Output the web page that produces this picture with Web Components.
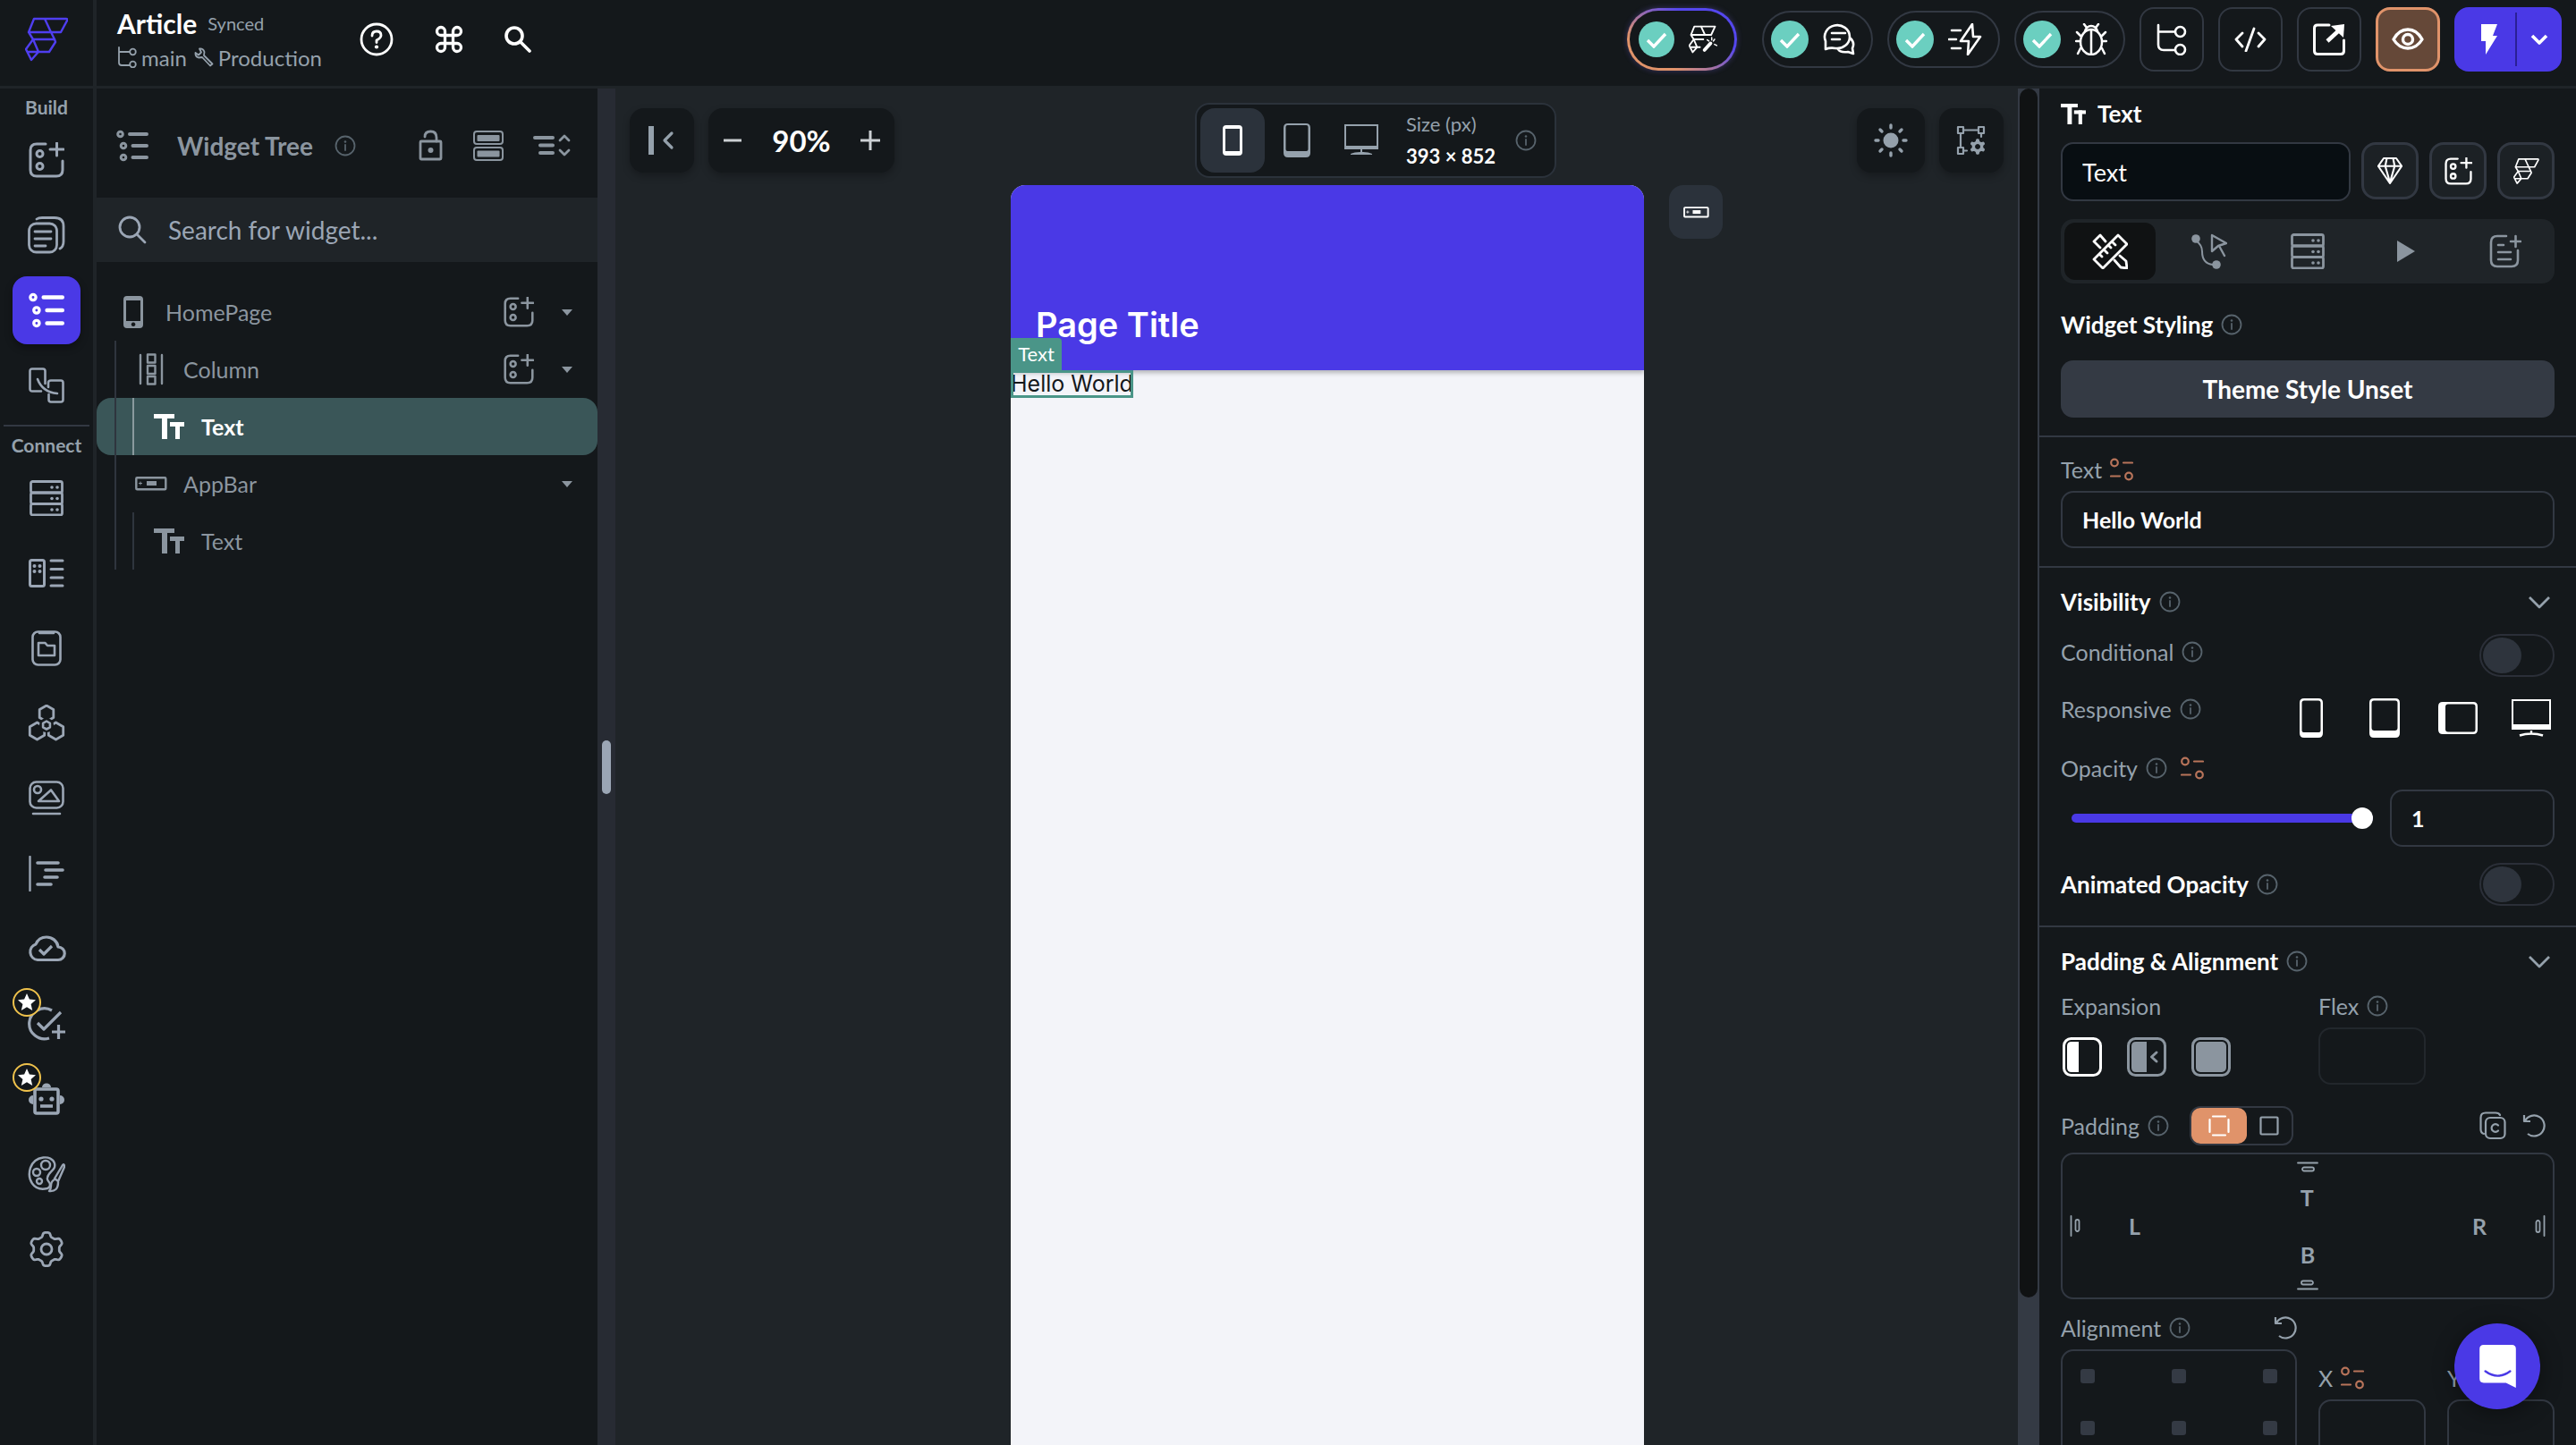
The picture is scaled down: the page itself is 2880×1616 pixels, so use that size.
<!DOCTYPE html>
<html lang="en">
<head>
<meta charset="utf-8">
<title>Article</title>
<style>
html,body{margin:0;height:100%;overflow:hidden;background:#14181b}
body{font-family:"Lato","Open Sans",sans-serif;font-size:24px;color:#95a1ac;
--bg:#14181b;--surface:#1f2428;--line:#323842;--muted:#95a1ac;--accent:#4a39e6;--orange:#e0936a;--teal:#6bcfc0}
</style>
</head>
<body>
<app-shell></app-shell>
<script>
const L=(s,w,extra='')=>`<g fill="none" stroke="currentColor" stroke-width="${w}" stroke-linecap="round" stroke-linejoin="round" ${extra}>${s}</g>`;
const F=s=>`<g fill="currentColor">${s}</g>`;
function gearPath(c,r,a){let d='';for(let i=0;i<=120;i++){const t=i/120*2*Math.PI;const k=Math.cos(6*t);const q=r+a*Math.tanh(2*k);
 d+=(i?'L':'M')+(c+q*Math.sin(t)).toFixed(2)+' '+(c-q*Math.cos(t)).toFixed(2);}return d+'Z';}
function hex(cx,cy,r){let d='';for(let i=0;i<6;i++){const t=i*Math.PI/3;d+=(i?'L':'M')+(cx+r*Math.sin(t)).toFixed(1)+' '+(cy-r*Math.cos(t)).toFixed(1);}return `<path d="${d}Z"/>`;}
const FLOW='<path d="M10 2H46Q48 2 47 4L40 17H4ZM22 2L29 17M4 17L9 25H33L29 17M33 25L34 28L27 39H3M9 25L15 39M9 25L1 36L7 48L15 39"/>';
const SERVER=`<rect x="1.5" y="1.5" width="35" height="12.5" rx="2"/><rect x="1.5" y="14" width="35" height="12.5" rx="2"/><rect x="1.5" y="26.500" width="35" height="12.500" rx="2"/>`;
const dots=a=>a.map(([x,y,r])=>`<circle cx="${x}" cy="${y}" r="${r}"/>`).join('');
const ICONS={
 logo:[48,50,L(FLOW,2.4)],
 flow:[32,34,L(FLOW,2.8),'0 0 49 50'],
 flowai:[32,34,L('<path d="M10 2H47L40 17H4ZM22 2L29 17M4 17L9 25H26M9 25L15 39H20M9 25L1 36L7 48L15 39M4 39H15"/>',3)+L('<path d="M28 44L39 32"/>',6)+L('<path d="M41 22V26M46 25L44 28M46 34L50 36M33 26L36 28"/>',2.4),'0 0 51 50'],
 add:[40,40,L('<path d="M19 2H9Q2 2 2 9V31Q2 38 9 38H31Q38 38 38 31V21M24 8H39M31.500 1V15"/><circle cx="12.500" cy="13" r="3.500"/><circle cx="12.500" cy="27" r="3.500"/>',3)],
 pages:[42,42,L('<rect x="1.500" y="8" width="31" height="32" rx="8"/><path d="M8 17H26M8 25H26M8 33H20M10 3Q12 1.500 16 1.500H30Q40 1.500 40 11V28Q40 34 36 36"/>',2.8)],
 tree:[36,36,L('<circle cx="4.500" cy="5" r="2.800"/><circle cx="8" cy="18" r="2.800"/><circle cx="8" cy="31" r="2.800"/>',3)+L('<path d="M15 5H34M18.500 18H34M18.500 31H34"/>',4)],
 board:[40,40,L('<path d="M14 26.500H4Q1.500 26.500 1.500 24V4Q1.500 1.500 4 1.500H16Q18.500 1.500 18.500 4V18M22 22V17Q22 14.500 25 14.500H36Q38.500 14.500 38.500 17V36Q38.500 38.500 36 38.500H25Q22.500 38.500 22.500 36V30M10 13C13 21 20 28 32 29"/>',2.6)],
 server:[38,40,L(SERVER,2.8)+F(dots([[25,8,1.8],[31,8,1.8],[25,20.500,1.8],[31,20.500,1.8],[25,33,1.8],[31,33,1.8]]))],
 api:[40,32,L('<rect x="1.500" y="1.500" width="16" height="29" rx="2"/><path d="M25 2H38M25 11.500H38M25 21H38M25 30H38"/>',3)+F(dots([[6.500,8,2],[12.500,8,2],[6.500,14,2],[12.500,14,2]]))],
 files:[34,40,L('<rect x="1.500" y="1.500" width="31" height="37" rx="6"/><path d="M9 3H25M8 14V28H26V17H18L15.500 14Z"/>',2.6)],
 hexes:[42,42,L(hex(21,10,9)+hex(10.500,29.500,9.500)+hex(31.500,29.500,9.500),2.8)+`<circle cx="21" cy="23" r="8" fill="#14181b"/>`+L(hex(21,23,4.500),2.6)],
 image:[40,40,L('<rect x="1.500" y="1.500" width="37" height="29" rx="7"/><circle cx="10" cy="10" r="4"/><path d="M11 23L25 10.500L34 23ZM5 37H35"/>',2.6)],
 logic:[40,40,L('<path d="M1.500 1V39"/>',2.4)+L('<path d="M10 8H33M19 16H38M18 24H32M10 32H25"/>',3.6)],
 cloud:[44,30,L('<path d="M12 27.500H35A7 7 0 0 0 35 13C34 6 28 2 22 2C16 2 12 5 10 10A9 9 0 0 0 12 27.500Z"/><path d="M14 16L19 21L28 12" stroke-linecap="butt"/>',3.2)],
 taskadd:[42,38,L('<path d="M27 4A17 17 0 1 0 24 35M11 18L18 25L37 6M27 28H42M34.500 20V36" stroke-linecap="butt"/>',3.2)],
 robot:[40,36,L('<rect x="7" y="7" width="26" height="27" rx="2"/><path d="M13 26H27" stroke-linecap="butt"/>',3.6)+F('<path d="M15 5a5 4.500 0 0 1 10 0zM5 14v10a5 5 0 0 1 0-10zM35 14v10a5 5 0 0 0 0-10z"/>'+dots([[14,18,2.6],[26,18,2.6]]))],
 palette:[42,42,L('<path d="M22 37C6 41 -1 26 3 14C8 0 27 -1 30 9C32 17 23 18 22 25C21 29 25 29 25 33Q25 36 22 37Z"/><circle cx="20" cy="11" r="5"/><circle cx="10" cy="19" r="4"/><circle cx="13" cy="29" r="3"/><path d="M39 11L30 26L34 29L41 13Q41 9 39 11ZM30 27Q26 29 26 34Q26 38 24 40Q34 41 34 30"/>',2.4)],
 gear:[42,42,L(`<path d="${gearPath(21,16.5,2.3)}"/><circle cx="21" cy="21" r="6"/>`,2.8)],
 branch:[22,24,L('<path d="M2 1V18Q2 21 5 21H14M2 6H14"/><circle cx="17.500" cy="6" r="3.300"/><circle cx="17.500" cy="20" r="3.300"/>',1.8)],
 wrench:[22,22,L('<path d="M6 1.500Q10 1 11.500 5L11 9L20.500 18.500L18 20.500L9 11L5 11.500Q1 10 1.500 6L5 8.500L8 5.500Z"/>',1.8)],
 help:[38,38,L('<circle cx="19" cy="19" r="17"/><path d="M14 15Q14 10 19 10Q24 10 24 14.500Q24 17.500 19 20V22.500"/>',2.8)+F(dots([[19,27.500,2.1]]))],
 cmd:[38,38,L('<path d="M15 6v12a3 3 0 1 0 3-3H6a3 3 0 1 0 3 3V6a3 3 0 1 0-3 3h12a3 3 0 1 0-3-3"/>',2.2),'0 0 24 24'],
 find:[30,30,L('<circle cx="11" cy="11" r="9"/><path d="M18 18L28 28"/>',3.6)],
 search:[32,32,L('<circle cx="13" cy="13" r="11"/><path d="M21 21L30 30"/>',2.8)],
 info:[24,24,L('<circle cx="12" cy="12" r="10.500"/><path d="M12 11V17"/>',1.8)+F(dots([[12,7.500,1.3]]))],
 lock:[28,36,L('<rect x="2" y="13" width="23" height="20" rx="1"/><path d="M7 8Q7 2 13.500 2Q20 2 20 9V13"/>',2.8)+F(dots([[13.500,23,3]]))],
 rows:[34,34,L('<rect x="1" y="1" width="32" height="14" rx="3"/><rect x="1" y="19" width="32" height="14" rx="3"/>',2)+F('<rect x="4.500" y="5" width="25" height="7" rx="1"/><rect x="4.500" y="22.500" width="25" height="7" rx="1"/>')],
 collapse:[42,26,L('<path d="M2 4H22M8 12.500H22M8 21H22" />',4)+L('<path d="M30 7L35 2L40 7M30 18L35 23L40 18"/>',2.8)],
 phone:[22,36,F('<path fill-rule="evenodd" d="M4 0H18Q22 0 22 4V32Q22 36 18 36H4Q0 36 0 32V4Q0 0 4 0ZM3 5V28H19V5ZM11 29.500a2.300 2.300 0 1 0 .1 0z"/>')],
 column:[28,36,L('<path d="M2 2V34M26 2V34"/><rect x="10" y="1.500" width="8.500" height="9"/><rect x="10" y="14" width="8.500" height="9"/><rect x="10" y="26" width="8.500" height="8.500"/>',2.4)],
 text:[34,28,F('<rect x="0" y="0" width="23" height="5"/><rect x="9" y="0" width="6" height="28"/><rect x="18" y="9" width="16" height="5"/><rect x="24" y="9" width="5" height="19"/>')],
 appbar:[36,16,L('<rect x="1.300" y="1.300" width="33" height="13" rx="1"/>',2.4)+L('<path d="M4.500 7.500H7.500M6 6V9"/>',1)+F('<rect x="13" y="5" width="11" height="5"/>')],
 caret:[12,7,F('<path d="M0 0H12L6 7Z"/>')],
 check:[24,20,`<path d="M2 11L9 18L22 4" fill="none" stroke="currentColor" stroke-width="3.400"/>`],
 chat:[36,36,L('<path d="M3 29V20A14 13 0 1 1 14 28Q8 27 3 29ZM10 11H25M10 18H19M31 17Q36 22 33 28L34 34L28 32Q19 33 17 29"/>',2.6)],
 bolts:[38,36,L('<path d="M27 1L14 20H23L22 35L36 15H28ZM4 8H14M1 18H9M4 28H14"/>',2.6)],
 bug:[36,36,L('<ellipse cx="18" cy="21" rx="12" ry="14"/><path d="M18 8V35M11 9Q13 3 18 3Q23 3 25 9M10 1L13 5M26 1L23 5M6 14L2 10M30 14L34 10M1 20H6M30 20H35M6 28L3 34M30 28L33 34"/>',2.5)],
 nodes:[36,36,L('<path d="M3 2V24Q3 30 9 30H21M3 9.500H21"/><circle cx="27.500" cy="9.500" r="5.500"/><circle cx="27.500" cy="29.500" r="5.500"/>',2.6)],
 code:[36,28,L('<path d="M9 7L2 14L9 22M27 7L34 14L27 22M22 2L13 27"/>',2.8)],
 open:[36,36,L('<path d="M18 2H5Q1.500 2 1.500 5.500V31Q1.500 34.500 5 34.500H31Q34.500 34.500 34.500 31V19"/>',3)+`<path d="M16 20L29 8" stroke="currentColor" stroke-width="4.500"/>`+F('<path d="M20 3L35 1L34 16Z"/>')],
 eye:[36,26,L('<path d="M2 13Q8 2 18 2Q28 2 34 13Q28 23 18 23Q8 23 2 13Z"/><circle cx="18" cy="13" r="5.500"/>',3.4)],
 flash:[20,34,F('<path d="M1 0H19L14 13H19L6 34V19H1Z"/>')],
 chev:[20,12,L('<path d="M2 2L10 10L18 2" stroke-linecap="butt"/>',3.6)],
 chevthin:[26,15,L('<path d="M2 2L13 13L24 2" stroke-linecap="butt"/>',2.8)],
 hide:[30,34,F('<rect x="0" y="1" width="6" height="32"/>')+L('<path d="M26 9L18 17L26 25"/>',3.2)],
 minus:[22,22,L('<path d="M1 11H21" stroke-linecap="butt"/>',3)],
 plus:[22,22,L('<path d="M0 11H22M11 0V22" stroke-linecap="butt"/>',3)],
 mobile:[22,34,F('<path fill-rule="evenodd" d="M4 0H18Q22 0 22 4V30Q22 34 18 34H4Q0 34 0 30V4Q0 0 4 0ZM3 4V29H19V4Z"/>')],
 tablet:[30,38,F('<path fill-rule="evenodd" d="M5 0H25Q30 0 30 5V33Q30 38 25 38H5Q0 38 0 33V5Q0 0 5 0ZM2.500 4V29Q2.500 31 4.500 31H25.500Q27.500 31 27.500 29V4Q27.500 2 25.500 2H4.500Q2.500 2 2.500 4Z"/>')],
 desktop:[38,36,F('<path fill-rule="evenodd" d="M0 0H38V28H0ZM2 2V24H36V2ZM18 28H20V31Q27 31 31 33V34H7V33Q11 31 18 31Z"/>')],
 mobile2:[26,44,F('<path fill-rule="evenodd" d="M5 0H21Q26 0 26 5V39Q26 44 21 44H5Q0 44 0 39V5Q0 0 5 0ZM2.500 5V36Q2.500 38 4.500 38H21.500Q23.500 38 23.500 36V5Q23.500 2.500 21 2.500H5Q2.500 2.500 2.500 5Z"/>')],
 tablet2:[34,44,F('<path fill-rule="evenodd" d="M5 0H29Q34 0 34 5V39Q34 44 29 44H5Q0 44 0 39V5Q0 0 5 0ZM2.500 5V33Q2.500 36 5.500 36H28.500Q31.500 36 31.500 33V5Q31.500 2.500 29 2.500H5Q2.500 2.500 2.500 5Z"/>')],
 landscape:[44,36,F('<path fill-rule="evenodd" d="M5 0H39Q44 0 44 5V31Q44 36 39 36H5Q0 36 0 31V5Q0 0 5 0ZM11 2.500Q8 2.500 8 5.500V30.500Q8 33.500 11 33.500H39Q41.500 33.500 41.500 31V5Q41.500 2.500 39 2.500Z"/>')],
 desktop2:[44,42,F('<path fill-rule="evenodd" d="M0 0H44V34H0ZM2 2V28H42V2Z"/>')+L('<path d="M22 35V38M9 40.500Q15 38.500 22 38.500Q29 38.500 35 40.500" stroke-linecap="butt"/>',2.4)],
 sun:[38,38,F(dots([[19,19,8.500]]))+L('<path d="M19 2V5M19 33V36M2 19H5M33 19H36M7 7L9 9M29 29L31 31M31 7L29 9M9 29L7 31"/>',3.4)],
 frame:[34,34,L('<rect x="2" y="2" width="6" height="7"/><rect x="25" y="2" width="6" height="7"/><rect x="2" y="25" width="6" height="7"/><path d="M8 5.500H25M5 9V25M28 9V13M8 28.500H12"/>',2.2)+F(`<path fill-rule="evenodd" d="${gearPath(24,7.5,1.3)}M24 21a3 3 0 1 0 .1 0z"/>`)],
 gem:[32,36,L('<path d="M8 2H24L31 12L16 34L1 12ZM1 12H31M12 2L10 12L16 33L22 12L20 2"/>',2.4)],
 design:[40,40,L('<path d="M29 2L39 12L12 39L2 29ZM13 18L17 22M18 13L21 16M22 9L26 13M8 23L11 26"/><path d="M15 9L9 2L2 9L9 16M25 30L32 38L39 39L38 31L31 25"/>',2.8)],
 action:[40,40,F(dots([[5,6,4.800],[28,35,4.800]]))+L('<path d="M5 8Q12 13 12 20Q12 34 24 35" stroke-width="2"/><path d="M23 2L39 11L30 14L23 20ZM31 14L37 25"/>',2.4)],
 play:[20,24,F('<path d="M0 0L20 12L0 24Z"/>')],
 docadd:[36,38,L('<path d="M19 2H9Q2 2 2 9V29Q2 36 9 36H25Q32 36 32 29V18M24 8H35M29.500 2V14M10 12H16M10 20H24M10 28H24"/>',2.6)],
 vars:[26,26,L('<circle cx="5" cy="5.500" r="3.800"/><circle cx="21" cy="20.500" r="3.800"/><path d="M15 5.500H25M1 20.500H11"/>',2.2)],
 exp1:[44,44,L('<rect x="1.500" y="1.500" width="41" height="41" rx="8"/>',3)+F('<path d="M10 5H18V39H10Q5 39 5 34V10Q5 5 10 5Z"/>')],
 exp2:[44,44,L('<rect x="1.500" y="1.500" width="41" height="41" rx="8"/>',3)+F('<path d="M10 5H22V39H10Q5 39 5 34V10Q5 5 10 5Z"/>')+L('<path d="M33 17L27.500 22L33 27" />',3)],
 exp3:[44,44,L('<rect x="1.500" y="1.500" width="41" height="41" rx="8"/>',3)+F('<rect x="5" y="5" width="34" height="34" rx="5"/>')],
 sides:[24,24,L('<path d="M5 1.500H19M5 22.500H19M1.500 5V19M22.500 5V19"/>',2.2)],
 square:[22,22,L('<rect x="1.500" y="1.500" width="19" height="19" rx="1"/>',2.2)],
 copy:[30,32,L('<rect x="7" y="7" width="21.500" height="23" rx="5"/><path d="M5 25Q1.500 24 1.500 20V7Q1.500 1.500 7 1.500H18Q22 1.500 23 4"/><path d="M21 15.500A4.300 4.300 0 1 0 21 21.500"/>',2.2)],
 undo:[26,28,L('<path d="M2 2V9H9M3 8.500A11.500 11.500 0 1 1 6 23" stroke-linecap="butt"/>',2.2)],
 edge:[24,12,L('<path d="M1 1.500H23"/><rect x="6" y="6.500" width="13" height="4" rx="2"/>',1.8)],
 star:[22,22,'<path d="M11 1L13.900 7.600L21 8.300L15.600 13L17.200 20L11 16.300L4.800 20L6.400 13L1 8.300L8.100 7.600Z" fill="#fff"/>'],
 talk:[44,52,'<path d="M5 0H39Q44 0 44 5V52L32 46H5Q0 46 0 41V5Q0 0 5 0Z" fill="#fff"/><path d="M7 32Q22 43 37 32" fill="none" stroke="#4a39e6" stroke-width="2.600" stroke-linecap="round"/>']
};
const BASE=`*{box-sizing:border-box}button,input{font:inherit;color:inherit;margin:0}
button{background:none;border:0;padding:0;display:flex;align-items:center;justify-content:center;flex:none}
h1,h2,h3,p,ul{margin:0;padding:0;font:inherit}
.row{display:flex;align-items:center}.grow{flex:1;min-width:0}`;
function define(name,css,html){
 customElements.define(name,class extends HTMLElement{
  constructor(){super();this.attachShadow({mode:'open'});}
  connectedCallback(){this.shadowRoot.innerHTML=`<style>${BASE}${css}</style>`+(typeof html==='function'?html(this):html);}
 });
}
const I=(n,h,c)=>`<ui-icon name="${n}"${h?` size="${h}"`:''}${c?` class="${c}"`:''}></ui-icon>`;

define('ui-icon',':host{display:block;flex:none;line-height:0}svg{display:block}',el=>{
 const [w,h,s,vb]=ICONS[el.getAttribute('name')];const H=+(el.getAttribute('size')||h);const W=Math.round(w*H/h);
 return `<svg width="${W}" height="${H}" viewBox="${vb||`0 0 ${w} ${h}`}" aria-hidden="true">${s}</svg>`;});
define('info-dot',':host{display:block;flex:none;color:#57636c}',I('info'));

define('status-pill',`:host{display:block}
button{height:64px;border:2px solid var(--line);border-radius:32px;padding:0 18px 0 8px;gap:16px;color:#fff}
.ok{width:42px;height:42px;border-radius:50%;background:var(--teal);display:flex;align-items:center;justify-content:center}
:host([glow]) button{height:70px;border:3px solid transparent;border-radius:35px;padding:0 19px 0 10px;
 background:linear-gradient(var(--bg),var(--bg)) padding-box,linear-gradient(215deg,#5547ee 30%,#e0936a 75%) border-box;box-shadow:0 0 6px #6f5cd066}
:host([glow]) .ok{width:40px;height:40px}`,
 el=>`<button type="button" aria-label="${el.getAttribute('icon')}"><span class="ok">${I('check')}</span>${I(el.getAttribute('icon'))}</button>`);

define('icon-button',`:host{display:block}button{width:72px;height:72px;border:2px solid var(--line);border-radius:16px;color:#fff}
:host([tone=orange]) button{background:#654838;border:3px solid var(--orange)}
:host([tone=float]) button{background:var(--bg);border:0;color:var(--muted);box-shadow:0 4px 8px #0004}
:host([wide]) button{width:76px}
:host([tone=soft]) button{width:64px;height:64px;background:#1c2125;border:3px solid var(--line)}
:host([tone=chip]) button{width:60px;height:60px;background:#2b323b;border:0}`,
 el=>`<button type="button" aria-label="${el.getAttribute('icon')}">${I(el.getAttribute('icon'),el.getAttribute('size'))}</button>`);

define('top-bar',`:host{display:flex;height:99px;border-bottom:3px solid var(--surface);background:var(--bg);color:#fff}
.logo{width:108px;border-right:4px solid var(--surface);display:flex;align-items:center;justify-content:center;color:#4f3ef0;padding-bottom:8px}
.name{padding:7px 0 0 23px;width:294px}
.name .row{height:38px}.t{font-size:30px;font-weight:700;line-height:36px}.s{font-size:20px;color:var(--muted);margin-left:12px}
.b{color:var(--muted);font-size:24px;gap:5px}.b span+ui-icon{margin-left:3px}
.tools{gap:44px;padding-bottom:8px}.right{gap:16px;padding:0 16px 8px 0}.right status-pill[glow]{margin-right:12px}
.run{display:flex;width:120px;height:72px;border-radius:16px;background:var(--accent);overflow:hidden;align-items:center}
.run button{height:60px}.run .a{width:68px;padding-left:10px}.run .c{width:52px;border-left:2px solid #2a1f95}`,
 `<div class="logo">${I('logo')}</div>
 <div class="name"><div class="row"><h1 class="t">Article</h1><span class="s">Synced</span></div>
 <div class="row b">${I('branch')}<span>main</span>${I('wrench')}<span>Production</span></div></div>
 <div class="row tools grow"><button type="button" aria-label="Help">${I('help')}</button><button type="button" aria-label="Shortcuts">${I('cmd',36)}</button><button type="button" aria-label="Find">${I('find')}</button></div>
 <div class="row right"><status-pill glow icon="flowai"></status-pill><status-pill icon="chat"></status-pill><status-pill icon="bolts"></status-pill><status-pill icon="bug"></status-pill>
 <icon-button icon="nodes"></icon-button><icon-button icon="code"></icon-button><icon-button icon="open"></icon-button><icon-button icon="eye" tone="orange"></icon-button>
 <div class="run"><button class="a" type="button" aria-label="Run">${I('flash')}</button><button class="c" type="button" aria-label="Run options">${I('chev')}</button></div></div>`);

define('rail-item',`:host{display:flex;height:84px;align-items:center;justify-content:center;position:relative;color:#9ba6b5}
button{width:76px;height:76px;border-radius:16px}
:host([active]) button{background:var(--accent);color:#fff;box-shadow:0 4px 8px #0005}
.badge{position:absolute;left:14px;top:2px;width:32px;height:32px;border:2px solid #efc24c;border-radius:50%;background:#14181b;display:flex;align-items:center;justify-content:center}`,
 el=>`<button type="button" aria-label="${el.getAttribute('icon')}">${I(el.getAttribute('icon'),el.hasAttribute('active')?40:'')}</button>${el.hasAttribute('starred')?`<span class="badge">${I('star')}</span>`:''}`);
const items=a=>a.map(n=>`<rail-item icon="${n}"></rail-item>`).join('');
define('nav-rail',`:host{display:block;width:108px;border-right:4px solid var(--surface);background:var(--bg);flex:none}
h2{font-size:21px;font-weight:700;line-height:38px;height:38px;text-align:center;padding-top:2px}
hr{border:0;height:2px;background:var(--line);margin:2px 4px 0}`,
 `<nav><h2>Build</h2>${items(['add','pages'])}<rail-item icon="tree" active></rail-item>${items(['board'])}<hr><h2>Connect</h2>${items(['server','api','files','hexes','image','logic','cloud'])}
 <rail-item icon="taskadd" starred></rail-item><rail-item icon="robot" starred></rail-item>${items(['palette','gear'])}</nav>`);

define('tree-row',`:host{display:flex;align-items:center;height:64px;padding:0 28px 0 20px;color:#8b959f}
.g{width:20px;height:64px;border-left:2px solid #2f353e;flex:none}
.i{width:42px;display:flex;justify-content:center;flex:none}.l{flex:1;margin-left:15px;font-size:25px}
:host([selected]){background:#3a5658;border-radius:16px;color:#fff;font-weight:700}:host([selected]) .g+.g{border-color:#8a9a9e}
.e{gap:31px}`,
 el=>'<span class="g"></span>'.repeat(+(el.getAttribute('depth')||0))+`<span class="i">${I(el.getAttribute('icon'))}</span><span class="l"><slot></slot></span><span class="row e">${el.hasAttribute('addable')?I('add',34):''}${el.hasAttribute('open')?I('caret'):''}</span>`);
define('widget-tree',`:host{display:flex;flex-direction:column;width:560px;background:var(--bg);flex:none}
.h{height:122px;padding:6px 30px 0 22px;color:#8b959f}h2{font-size:28px;font-weight:700;margin:0 24px 0 32px}
.a{gap:33px;justify-content:flex-end}
.s{height:72px;background:var(--surface);padding:0 24px;gap:24px;color:#9ba6b5;margin-bottom:24px}
input{background:none;border:0;outline:0;font-size:28px;width:100%;padding:0}input::placeholder{color:#9ba6b5;opacity:1}`,
 `<div class="row h">${I('tree')}<h2>Widget Tree</h2><info-dot></info-dot><div class="row a grow">${I('lock')}${I('rows')}${I('collapse')}</div></div>
 <label class="row s">${I('search')}<input type="search" placeholder="Search for widget..." aria-label="Search for widget"></label>
 <tree-row icon="phone" addable open>HomePage</tree-row><tree-row depth="1" icon="column" addable open>Column</tree-row><tree-row depth="2" icon="text" selected>Text</tree-row>
 <tree-row depth="1" icon="appbar" open>AppBar</tree-row><tree-row depth="2" icon="text">Text</tree-row>`);
define('split-handle',`:host{width:20px;background:#272b33;display:flex;align-items:center;justify-content:center;flex:none}
span{width:10px;height:60px;border-radius:5px;background:#9ba6b5}`,'<span></span>');

define('phone-preview',`:host{display:flex;flex-direction:column;width:708px;background:#f3f4f9;border-radius:16px 16px 0 0;font-family:Inter,sans-serif;overflow:hidden}
.bar{height:207px;background:var(--accent);position:relative;box-shadow:0 3px 5px #0004;display:flex;align-items:flex-end;padding:0 28px 26px}
h2{color:#fff;font-size:38px;font-weight:600;line-height:50px}
.tag{position:absolute;left:0;bottom:0;width:57px;height:36px;background:#4a9588;color:#fff;font:22px/36px Lato,sans-serif;text-align:center;border-radius:0 4px 0 0}
p{position:relative;align-self:flex-start;outline:3px solid #4a9588;outline-offset:-3px;color:#14181b;font-size:25px;line-height:31px}`,
 `<div class="bar"><h2>Page Title</h2><span class="tag">Text</span></div><p>Hello World</p>`);
define('design-canvas',`:host{display:flex;flex-direction:column;flex:1;min-width:0;background:var(--surface);padding-top:16px}
.top{justify-content:space-between;padding:0 16px;height:84px}.g{gap:16px}
.zoom{width:208px;height:72px;background:var(--bg);border-radius:16px;box-shadow:0 4px 8px #0004;justify-content:space-between;padding:0 16px;color:#fff;font-size:33px;font-weight:700}
.zoom ui-icon{color:#ccd0d4}
.size{width:404px;height:84px;background:var(--bg);border:2px solid #2b323b;border-radius:16px;padding-left:4px;color:var(--muted)}
.size button{width:72px;height:72px;border-radius:16px}.size .on{background:#2b323b;color:#fff}
.px{margin:0 16px 0 14px;font-size:22px;line-height:36px;width:106px;white-space:nowrap}.px b{display:block;color:#fff}
.stage{display:grid;grid-template-columns:1fr auto 1fr;padding:8px 0 0 24px;flex:1;min-height:0}.side{padding-left:28px}`,
 `<div class="row top"><div class="row g"><icon-button tone="float" icon="hide"></icon-button><div class="row zoom"><button type="button" aria-label="Zoom out">${I('minus')}</button><span>90%</span><button type="button" aria-label="Zoom in">${I('plus')}</button></div></div>
 <div class="row size"><button class="on" type="button" aria-label="Phone">${I('mobile')}</button><button type="button" aria-label="Tablet">${I('tablet')}</button><button type="button" aria-label="Desktop">${I('desktop')}</button><div class="px">Size (px)<b>393 × 852</b></div><info-dot></info-dot></div>
 <div class="row g"><icon-button tone="float" wide icon="sun"></icon-button><icon-button tone="float" icon="frame"></icon-button></div></div>
 <div class="stage"><span></span><phone-preview></phone-preview><div class="side"><icon-button tone="chip" icon="appbar" size="13"></icon-button></div></div>`);
define('scroll-rail',`:host{display:block;width:24px;background:#343a44;border-right:2px solid #343a44;flex:none}span{display:block;height:1352px;background:#101213;border-radius:10px;margin-left:2px}`,'<span></span>');

const info='<info-dot></info-dot>',v=I('vars','','v');
define('props-panel',`:host{display:block;width:600px;background:var(--bg);flex:none;overflow:hidden}
section{padding:18px 24px 20px;border-bottom:2px solid var(--line)}section.first{padding-top:0}section.value{padding-top:20px}section.vis{padding-bottom:22px}section:last-child{border:0}
.row{gap:9px}.w{color:#fff;font-weight:700}.v{color:#b8745a}info-dot+.v{margin-left:6px}
.title{height:56px;gap:13px;font-size:26px;margin-bottom:4px}
.field{height:64px;border:2px solid var(--line);border-radius:14px;background:none;padding:0 22px;width:100%;outline:0;color:#fff;font-size:25px;font-weight:700;display:block}
.name{background:#080e12;height:66px;width:auto;font-size:27px;font-weight:400}.names{gap:12px;align-items:flex-start}
.tabs{display:grid;grid-template-columns:repeat(5,1fr);height:72px;margin:20px 0 26px;background:var(--surface);border-radius:14px;color:#8b959f}
.tabs button{height:64px;margin:4px;border-radius:12px}.tabs .on{background:#101213;color:#fff}
.theme{width:100%;height:64px;border-radius:14px;background:#343a44;color:#fff;font-size:28px;font-weight:700;margin-top:20px}
.h{height:40px;font-size:26px}.l{height:32px;margin-bottom:8px;font-size:25px}.between{justify-content:space-between}
.end{padding-right:4px}.head{margin-bottom:14px}.vis .head{margin-bottom:16px}
.sw{height:48px}.up{align-items:flex-start}.up .lab{height:40px}.anim{margin-top:18px;font-size:26px}
.lab{display:flex;align-items:center;font-size:25px;gap:9px}.lab.w{font-size:26px}
.toggle{appearance:none;width:84px;height:48px;border:2px solid #2b2f38;border-radius:24px;padding:2px;display:flex;flex:none}
.toggle::before{content:"";width:43px;height:100%;border-radius:50%;background:#2e343d}
.resp{height:44px;align-items:flex-start;margin:24px 0 18px}.resp .lab{height:24px}
.dev{display:grid;grid-template-columns:repeat(4,44px);gap:38px;place-items:center;color:#fff;height:44px;padding-right:4px}
.slide{gap:0}
input[type=range]{appearance:none;background:none;flex:1;min-width:0;height:24px;margin:0 19px 0 12px}
input[type=range]::-webkit-slider-runnable-track{height:10px;border-radius:5px;background:var(--accent)}
input[type=range]::-webkit-slider-thumb{appearance:none;width:24px;height:24px;margin-top:-7px;border-radius:50%;background:#fff}
.num{width:184px;flex:none}.cols{display:grid;grid-template-columns:264px 1fr 1fr;column-gap:24px}
.dim{border-color:#22272c}.exp{gap:28px;height:64px;padding:2px 0 0 2px;color:#8b959f}.exp .on{color:#fff}
.pad{margin-top:24px}.acts{gap:18px;padding-right:10px}
.seg{width:116px;height:44px;border:2px solid var(--line);border-radius:12px;margin-left:14px;gap:0}.seg button{height:40px;width:50px}.seg .on{width:62px;background:var(--orange);color:#fff;border-radius:10px}
.box{display:grid;grid-template-columns:1fr 1fr 1fr;align-items:center;height:164px;border:2px solid var(--line);border-radius:14px;margin:8px 0 12px;font-weight:700;font-size:25px;line-height:30px}
.mid{display:flex;flex-direction:column;align-items:center;justify-content:space-between;height:100%;padding:8px 0}.tb{display:grid;gap:34px}
.sd{gap:48px;padding:0 2px}.sd.r{justify-content:flex-end}.rot{transform:rotate(-90deg)}.rot2{transform:rotate(90deg)}.flip{transform:rotate(180deg)}
.al{height:40px;margin-bottom:4px}
.grid{border:2px solid var(--line);border-radius:14px;height:176px;padding:20px;display:grid;grid-template-columns:repeat(3,16px);justify-content:space-between;align-content:space-between}
.grid i{width:16px;height:16px;background:#343a44;border-radius:3px}.xy{padding-top:60px}`,
 `<section class="first"><div class="row title w">${I('text',23)}<h2>Text</h2></div>
 <div class="row names"><input class="field name grow" value="Text" aria-label="Widget name"><icon-button tone="soft" icon="gem" size="32"></icon-button><icon-button tone="soft" icon="add" size="31"></icon-button><icon-button tone="soft" icon="flow" size="31"></icon-button></div>
 <div class="tabs"><button class="on" type="button" aria-label="Style">${I('design')}</button><button type="button" aria-label="Actions">${I('action')}</button><button type="button" aria-label="Backend">${I('server')}</button><button type="button" aria-label="Animations">${I('play')}</button><button type="button" aria-label="Notes">${I('docadd')}</button></div>
 <div class="row h w"><h3>Widget Styling</h3>${info}</div><button class="theme" type="button">Theme Style Unset</button></section>
 <section class="value"><div class="row l"><label for="txt">Text</label>${v}</div><input id="txt" class="field" value="Hello World"></section>
 <section class="vis"><div class="row h head between end"><div class="row w"><h3>Visibility</h3>${info}</div><button type="button" aria-label="Collapse visibility">${I('chevthin')}</button></div>
 <div class="row between sw up"><div class="lab"><label for="cond">Conditional</label>${info}</div><input id="cond" class="toggle" type="checkbox"></div>
 <div class="row resp between"><div class="lab">Responsive${info}</div><div class="dev">${I('mobile2')}${I('tablet2')}${I('landscape')}${I('desktop2')}</div></div>
 <div class="row l"><label for="op">Opacity</label>${info}${v}</div>
 <div class="row slide"><input id="op" type="range" min="0" max="1" value="1" step="1"><input class="field num" value="1" aria-label="Opacity value"></div>
 <div class="row between sw anim"><div class="lab w"><label for="anim">Animated Opacity</label>${info}</div><input id="anim" class="toggle" type="checkbox"></div></section>
 <section><div class="row h head between end"><div class="row w"><h3>Padding &amp; Alignment</h3>${info}</div><button type="button" aria-label="Collapse padding">${I('chevthin')}</button></div>
 <div class="cols"><div><div class="row l">Expansion</div><div class="row exp"><button class="on" type="button" aria-label="Default">${I('exp1')}</button><button type="button" aria-label="Flexible">${I('exp2')}</button><button type="button" aria-label="Expanded">${I('exp3')}</button></div></div>
 <div><div class="row l"><label for="flex">Flex</label>${info}</div><input id="flex" class="field dim"></div></div>
 <div class="row between pad"><div class="lab">Padding${info}<div class="row seg"><button class="on" type="button" aria-label="Each side">${I('sides')}</button><button type="button" aria-label="All sides">${I('square')}</button></div></div>
 <div class="row acts"><button type="button" aria-label="Copy">${I('copy')}</button><button type="button" aria-label="Reset">${I('undo')}</button></div></div>
 <div class="box"><div class="row sd">${I('edge','','rot')}<span>L</span></div><div class="mid">${I('edge')}<div class="tb"><span>T</span><span>B</span></div>${I('edge','','flip')}</div><div class="row sd r"><span>R</span>${I('edge','','rot2')}</div></div>
 <div class="cols"><div><div class="row between al"><div class="lab">Alignment${info}</div><button type="button" aria-label="Reset alignment">${I('undo')}</button></div><div class="grid">${'<i></i>'.repeat(9)}</div></div>
 <div class="xy"><div class="row l"><label for="x">X</label>${v}</div><input id="x" class="field"></div>
 <div class="xy"><div class="row l"><label for="y">Y</label>${v}</div><input id="y" class="field"></div></div></section>`);

define('chat-launcher',`:host{position:absolute;right:40px;bottom:40px}button{width:96px;height:96px;border-radius:50%;background:var(--accent);box-shadow:0 4px 24px #0006}`,
 `<button type="button" aria-label="Open chat">${I('talk',48)}</button>`);
define('app-shell',`:host{display:flex;flex-direction:column;height:100vh;overflow:hidden;position:relative}main{display:flex;flex:1;min-height:0}`,
 `<top-bar></top-bar><main><nav-rail></nav-rail><widget-tree></widget-tree><split-handle></split-handle><design-canvas></design-canvas><scroll-rail></scroll-rail><props-panel></props-panel></main><chat-launcher></chat-launcher>`);
</script>
</body>
</html>
